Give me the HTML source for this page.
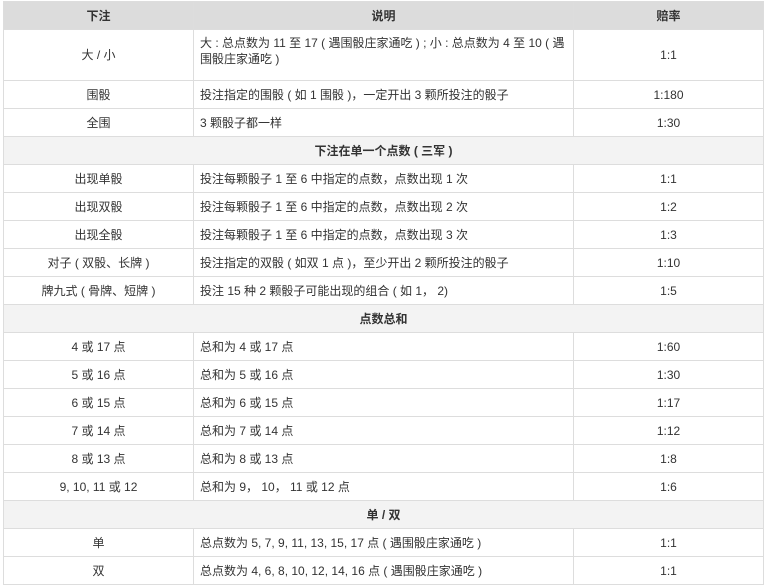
<!DOCTYPE html>
<html><head><meta charset="utf-8"><style>
body{margin:0;background:#fff;}
table{position:absolute;left:3px;top:1px;width:760px;border-collapse:collapse;table-layout:fixed;font-family:"Liberation Sans","Noto Sans CJK SC",sans-serif;font-size:12px;color:#333;}
td,th{border:1px solid #ddd;height:27px;padding:0 6px;line-height:16px;}
th{background:#dcdcdc;font-weight:bold;text-align:center;}
td.c{text-align:center;}
tr.s td{background:#f3f3f3;text-align:center;font-weight:bold;}
tr.t td{height:45px;}
</style></head><body>
<table>
<colgroup><col style="width:190px"><col style="width:380px"><col style="width:190px"></colgroup>
<tr><th>下注</th><th>说明</th><th>赔率</th></tr>
<tr class="t"><td class="c">大 / 小</td><td style="vertical-align:top;padding-top:5px">大 : 总点数为 11 至 17 ( 遇围骰庄家通吃 ) ; 小 : 总点数为 4 至 10 ( 遇围骰庄家通吃 )</td><td class="c">1:1</td></tr>
<tr><td class="c">围骰</td><td>投注指定的围骰 ( 如 1 围骰 )，一定开出 3 颗所投注的骰子</td><td class="c">1:180</td></tr>
<tr><td class="c">全围</td><td>3 颗骰子都一样</td><td class="c">1:30</td></tr>
<tr class="s"><td colspan="3">下注在单一个点数 ( 三军 )</td></tr>
<tr><td class="c">出现单骰</td><td>投注每颗骰子 1 至 6 中指定的点数，点数出现 1 次</td><td class="c">1:1</td></tr>
<tr><td class="c">出现双骰</td><td>投注每颗骰子 1 至 6 中指定的点数，点数出现 2 次</td><td class="c">1:2</td></tr>
<tr><td class="c">出现全骰</td><td>投注每颗骰子 1 至 6 中指定的点数，点数出现 3 次</td><td class="c">1:3</td></tr>
<tr><td class="c">对子 ( 双骰、长牌 )</td><td>投注指定的双骰 ( 如双 1 点 )，至少开出 2 颗所投注的骰子</td><td class="c">1:10</td></tr>
<tr><td class="c">牌九式 ( 骨牌、短牌 )</td><td>投注 15 种 2 颗骰子可能出现的组合 ( 如 1， 2)</td><td class="c">1:5</td></tr>
<tr class="s"><td colspan="3">点数总和</td></tr>
<tr><td class="c">4 或 17 点</td><td>总和为 4 或 17 点</td><td class="c">1:60</td></tr>
<tr><td class="c">5 或 16 点</td><td>总和为 5 或 16 点</td><td class="c">1:30</td></tr>
<tr><td class="c">6 或 15 点</td><td>总和为 6 或 15 点</td><td class="c">1:17</td></tr>
<tr><td class="c">7 或 14 点</td><td>总和为 7 或 14 点</td><td class="c">1:12</td></tr>
<tr><td class="c">8 或 13 点</td><td>总和为 8 或 13 点</td><td class="c">1:8</td></tr>
<tr><td class="c">9, 10, 11 或 12</td><td>总和为 9， 10， 11 或 12 点</td><td class="c">1:6</td></tr>
<tr class="s"><td colspan="3">单 / 双</td></tr>
<tr><td class="c">单</td><td>总点数为 5, 7, 9, 11, 13, 15, 17 点 ( 遇围骰庄家通吃 )</td><td class="c">1:1</td></tr>
<tr><td class="c">双</td><td>总点数为 4, 6, 8, 10, 12, 14, 16 点 ( 遇围骰庄家通吃 )</td><td class="c">1:1</td></tr>
</table>
</body></html>
